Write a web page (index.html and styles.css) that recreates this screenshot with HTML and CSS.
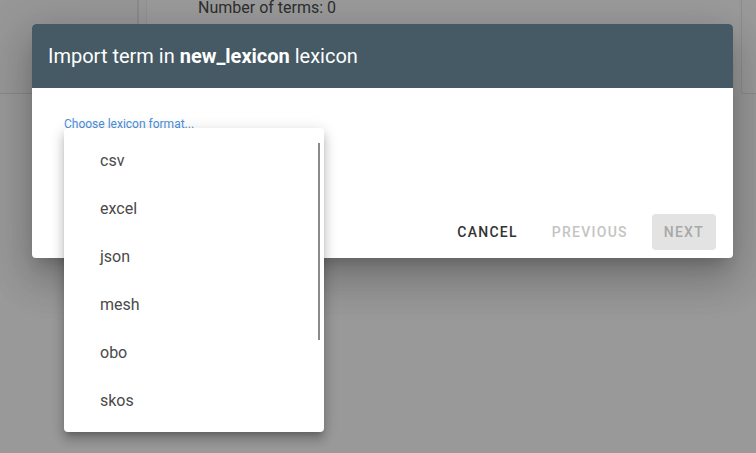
FILE: index.html
```html
<!DOCTYPE html>
<html>
<head>
<meta charset="utf-8">
<link rel="stylesheet" href="styles.css">
</head>
<body>
<div class="page">
  <div class="side-card"></div>
  <div class="main-card">
    <div class="terms">Number of terms: 0</div>
  </div>
  <div class="right-card"></div>
</div>

<div class="dialog">
  <div class="dialog-header">Import term in <b>new_lexicon</b> lexicon</div>
  <div class="dialog-body">
    <div class="field-label">Choose lexicon format...</div>
  </div>
  <div class="dialog-actions">
    <button class="btn btn-cancel">Cancel</button>
    <button class="btn btn-disabled">Previous</button>
    <button class="btn btn-next">Next</button>
  </div>
</div>

<div class="menu">
  <div class="menu-item">csv</div>
  <div class="menu-item">excel</div>
  <div class="menu-item">json</div>
  <div class="menu-item">mesh</div>
  <div class="menu-item">obo</div>
  <div class="menu-item">skos</div>
  <div class="scroll-thumb"></div>
</div>
</body>
</html>
```

FILE: styles.css
```css
html, body {
  margin: 0;
  padding: 0;
}
body {
  width: 756px;
  height: 453px;
  overflow: hidden;
  background: #999999;
  font-family: Roboto, "Liberation Sans", sans-serif;
  position: relative;
}
.page {
  display: flex;
  height: 94px;
}
.side-card {
  width: 137px;
  height: 93px;
  background: #979797;
  border-right: 2px solid #8c8c8c;
  border-bottom: 1px solid #888888;
}
.main-card {
  flex: 1;
  margin-left: 7px;
  height: 94px;
  background: #9b9b9b;
  border-left: 1px solid #939393;
}
.terms {
  margin-top: -2px;
  padding-left: 51px;
  font-size: 16px;
  line-height: 19px;
  color: #2e2e2e;
}
.right-card {
  width: 14px;
  height: 93px;
  margin-left: 2px;
  background: #9a9a9a;
  border-left: 1px solid #8e8e8e;
  border-bottom: 1px solid #8a8a8a;
  border-bottom-left-radius: 3px;
}
.dialog {
  position: absolute;
  left: 32px;
  top: 24px;
  width: 701px;
  height: 234px;
  background: #ffffff;
  border-radius: 4px;
  overflow: hidden;
  display: flex;
  flex-direction: column;
  box-shadow: 0 11px 15px -7px rgba(0,0,0,.2), 0 24px 38px 3px rgba(0,0,0,.14), 0 9px 46px 8px rgba(0,0,0,.12);
}
.dialog-header {
  height: 64px;
  line-height: 64px;
  padding-left: 16px;
  background: #455a64;
  color: #ffffff;
  font-size: 20px;
}
.dialog-header b {
  font-weight: 700;
}
.dialog-body {
  flex: 1;
  padding: 29px 32px 0;
}
.field-label {
  font-size: 12px;
  line-height: 14px;
  color: #4a8fdb;
}
.dialog-actions {
  display: flex;
  justify-content: flex-end;
  align-items: center;
  padding: 0 17px 8px 0;
}
.btn {
  height: 36px;
  padding: 0 16px;
  margin-left: 2px;
  border: none;
  border-radius: 4px;
  background: transparent;
  font-family: Roboto, "Liberation Sans", sans-serif;
  font-size: 14px;
  font-weight: 500;
  letter-spacing: 1.25px;
  text-transform: uppercase;
}
.btn-cancel {
  color: #333333;
}
.btn-disabled {
  color: #c4c4c4;
}
.btn-next {
  margin-left: 8px;
  padding: 0 12px;
  background: #e3e3e3;
  color: #a8a8a8;
}
.menu {
  position: absolute;
  left: 64px;
  top: 128px;
  width: 260px;
  height: 304px;
  padding: 8px 0;
  box-sizing: border-box;
  background: #ffffff;
  border-radius: 4px;
  overflow: hidden;
  box-shadow: 0 5px 5px -3px rgba(0,0,0,.2), 0 8px 10px 1px rgba(0,0,0,.14), 0 3px 14px 2px rgba(0,0,0,.12);
}
.menu-item {
  height: 48px;
  line-height: 49px;
  padding-left: 36px;
  font-size: 16px;
  color: #4a4a4a;
}
.scroll-thumb {
  position: absolute;
  left: 254px;
  top: 15px;
  width: 2px;
  height: 197px;
  background: #8a8a8a;
}
```
